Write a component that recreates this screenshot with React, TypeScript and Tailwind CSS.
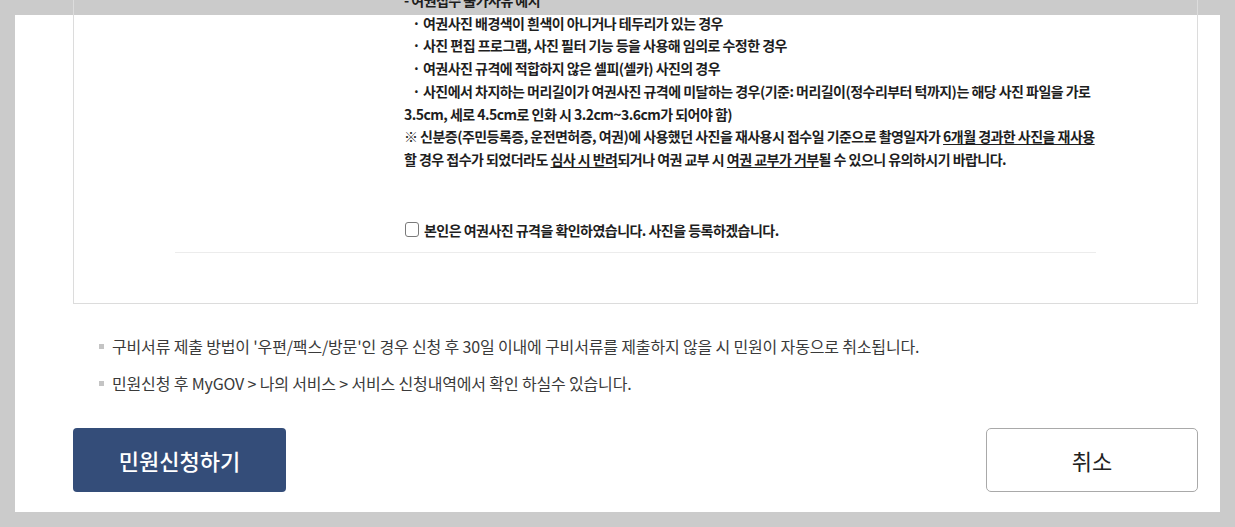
const kr = "font-['Noto_Sans_CJK_KR','Noto_Sans',sans-serif]";

function Dot() {
  return <span className="inline-block w-[19px] text-right pr-[3px]">·</span>;
}

function Notice({ children }: { children: React.ReactNode }) {
  return (
    <li className="flex items-center gap-[8px]">
      <span className="w-[5px] h-[5px] bg-[#c4c4c4] shrink-0" />
      <span>{children}</span>
    </li>
  );
}

export default function App() {
  return (
    <main className={`min-h-[527px] bg-[#cbcbcb] p-[15px] ${kr}`}>
      <div className="flex flex-col bg-white pl-[58px] pr-[22px] pb-[20px]">
        <section className="flow-root -mt-[15px] border border-t-0 border-[#dcdcdc] px-[101px] pb-[50px]">
          <div className="pl-[229px] text-[14px] leading-[22.7px] font-bold text-[#1e1e1e] tracking-[-0.038em] whitespace-nowrap -mt-[11px]">
            <p>- 여권접수 불가사유 예시</p>
            <p><Dot />여권사진 배경색이 흰색이 아니거나 테두리가 있는 경우</p>
            <p><Dot />사진 편집 프로그램, 사진 필터 기능 등을 사용해 임의로 수정한 경우</p>
            <p><Dot />여권사진 규격에 적합하지 않은 셀피(셀카) 사진의 경우</p>
            <p>
              <Dot />사진에서 차지하는 머리길이가 여권사진 규격에 미달하는 경우(기준: 머리길이(정수리부터 턱까지)는 해당 사진 파일을 가로
              <br />
              3.5cm, 세로 4.5cm로 인화 시 3.2cm~3.6cm가 되어야 함)
            </p>
            <p>
              ※ 신분증(주민등록증, 운전면허증, 여권)에 사용했던 사진을 재사용시 접수일 기준으로 촬영일자가{" "}
              <span className="underline underline-offset-2">6개월 경과한 사진을 재사용</span>
              <br />
              할 경우 접수가 되었더라도 <span className="underline underline-offset-2">심사 시 반려</span>되거나 여권 교부 시{" "}
              <span className="underline underline-offset-2">여권 교부가 거부</span>될 수 있으니 유의하시기 바랍니다.
            </p>
            <label className="mt-[48px] flex items-center gap-[5px] ml-px">
              <span className="w-[14px] h-[15px] border border-[#7a7a7a] rounded-[3px] bg-white" />
              <span>본인은 여권사진 규격을 확인하였습니다. 사진을 등록하겠습니다.</span>
            </label>
          </div>
          <div className="mt-[11px] border-b border-[#ececec]" />
        </section>

        <ul className="mt-[31px] pl-[26px] flex flex-col gap-[14px] text-[16px] leading-[23px] text-[#3a3a3a] tracking-[-0.01em]">
          <Notice>
            구비서류 제출 방법이 '우편/팩스/방문'인 경우 신청 후 30일 이내에 구비서류를 제출하지 않을 시 민원이 자동으로 취소됩니다.
          </Notice>
          <Notice>민원신청 후 MyGOV &gt; 나의 서비스 &gt; 서비스 신청내역에서 확인 하실수 있습니다.</Notice>
        </ul>

        <div className="mt-[33px] flex justify-between">
          <button className="w-[213px] h-[64px] rounded-[4px] bg-[#344d79] text-white text-[22px] font-medium">
            민원신청하기
          </button>
          <button className="w-[212px] h-[64px] rounded-[5px] border border-[#a9a9a9] bg-white text-[#222] text-[22px]">
            취소
          </button>
        </div>
      </div>
    </main>
  );
}
